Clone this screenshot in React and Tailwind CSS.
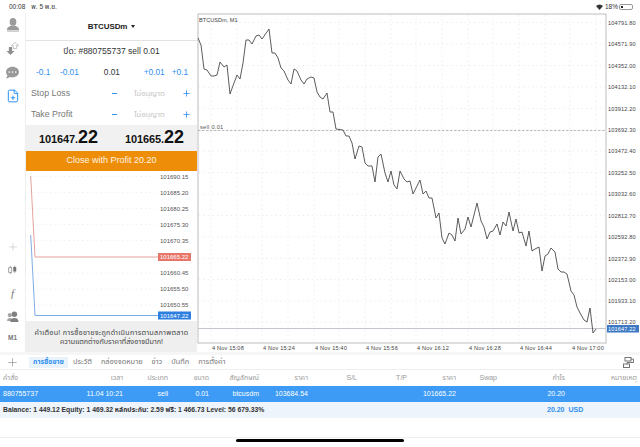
// App.jsx
import React from "react";
import { FaCommentDots } from "react-icons/fa";
import { FilePlus, Plus } from "lucide-react";

const mainLine =
  "198,38 201,45 204,69 207,70 211,76 214,76 217,75 220,62 224,67 227,65 230,94 234,83 237,75 240,79 243,63 246,40 249,40 252,44 256,36 259,35 262,39 269,29 272,53 275,53 278,58 281,68 284,71 288,80 291,84 294,69 297,71 301,80 304,84 307,79 311,77 314,78 317,92 320,97 323,99 327,93 330,112 333,112 336,129 343,130 346,136 349,136 352,143 355,159 359,146 362,147 365,163 368,166 372,166 375,182 378,157 381,154 385,173 388,182 391,171 394,185 397,189 400,171 404,179 407,182 410,181 413,194 420,180 423,194 426,191 429,198 432,198 436,218 439,213 442,238 445,244 449,233 452,235 455,241 458,218 461,234 465,229 468,217 471,227 477,203 481,221 484,227 487,239 490,232 493,231 497,224 500,235 503,222 506,226 509,212 513,231 516,219 519,233 522,232 526,246 529,231 532,251 535,249 539,247 542,271 545,256 548,254 551,248 555,252 558,269 561,272 564,272 567,274 571,291 574,295 577,307 580,313 584,320 587,322 590,308 593,333 596,329";

const priceLabels = [
  ["104791.80", 22.5],
  ["104571.90", 44],
  ["104352.00", 65.5],
  ["104132.10", 87],
  ["103912.20", 108.5],
  ["103692.30", 130],
  ["103472.40", 151],
  ["103252.50", 172.5],
  ["103032.60", 194],
  ["102812.70", 215.5],
  ["102592.80", 237],
  ["102372.90", 258.5],
  ["102153.00", 279.5],
  ["101933.10", 301],
  ["101713.20", 322],
];

const timeLabels = [
  ["4 Nov 15:08", 228],
  ["4 Nov 15:24", 279],
  ["4 Nov 15:40", 331],
  ["4 Nov 15:56", 382],
  ["4 Nov 16:12", 433],
  ["4 Nov 16:28", 485],
  ["4 Nov 16:44", 536],
  ["4 Nov 17:00", 588],
];

const gridX = [211, 237, 262, 288, 314, 339, 365, 391, 416, 442, 468, 493, 519, 545, 570, 596];

const miniLabels = [
  ["101690.15", 177.5],
  ["101685.20", 193.5],
  ["101680.25", 209.5],
  ["101675.30", 225.5],
  ["101670.35", 241.5],
  ["101660.45", 274],
  ["101655.50", 290],
  ["101650.55", 306],
];

const tabs = ["ประวัติ", "กล่องจดหมาย", "ข่าว", "บันทึก", "การตั้งค่า"];

const columns = ["คำสั่ง", "เวลา", "ประเภท", "ขนาด", "สัญลักษณ์", "ราคา", "S/L", "T/P", "ราคา", "Swap", "กำไร", "หมายเหตุ"];
const orderRow = ["880755737", "11.04 10:21", "sell", "0.01", "btcusdm", "103684.54", "", "", "101665.22", "", "20.20", ""];

const tableGrid = "grid grid-cols-[34px_86px_45px_41px_50px_49px_49px_50px_49px_41px_68px_72px] pl-[3px] pr-[3px] items-center";

const PriceChart = () => (
  <svg viewBox="197 13 443 339" className="w-full h-full block">
    <rect x="198" y="14" width="408" height="329" fill="#fff" stroke="#bdbdbd" strokeWidth="1" />
    {gridX.map((x) => (
      <line key={x} x1={x} x2={x} y1="15" y2="342" stroke="#e6e6e6" strokeWidth="0.7" strokeDasharray="1.5 3" />
    ))}
    {priceLabels.map(([label, y]) => (
      <line key={label} x1="199" x2="609" y1={y} y2={y} stroke="#e6e6e6" strokeWidth="0.7" strokeDasharray="1.5 3" />
    ))}
    <line x1="198" x2="606" y1="130.5" y2="130.5" stroke="#a8a8a8" strokeWidth="0.8" strokeDasharray="2.5 1.5" />
    <line x1="198" x2="606" y1="328.5" y2="328.5" stroke="#c4c4cc" strokeWidth="1" />
    <polyline points={mainLine} fill="none" stroke="#4a4a4a" strokeWidth="0.9" strokeLinejoin="miter" />
    <text x="199" y="21.5" fontSize="5.6" fill="#444">BTCUSDm, M1</text>
    <text x="200" y="129" fontSize="5.6" letterSpacing="0.3" fill="#555">sell 0.01</text>
    {priceLabels.map(([label, y]) => (
      <text key={label} x="608" y={y + 2} fontSize="5.6" letterSpacing="0.15" fill="#444">{label}</text>
    ))}
    <rect x="607" y="325" width="32" height="7.5" fill="#3d78c4" />
    <text x="608" y="331" fontSize="5.6" letterSpacing="0.15" fill="#fff">101647.22</text>
    {timeLabels.map(([label, x]) => (
      <text key={label} x={x} y="349.5" fontSize="5.6" letterSpacing="0.15" textAnchor="middle" fill="#444">{label}</text>
    ))}
  </svg>
);

const MiniChart = () => (
  <svg viewBox="26 172 171 150" className="w-full h-full block">
    {miniLabels.map(([label, y]) => (
      <line key={label} x1="28" x2="158" y1={y} y2={y} stroke="#ececec" strokeWidth="0.7" strokeDasharray="1.5 3" />
    ))}
    <polyline points="30.7,177 35,258 158,258" fill="none" stroke="#e5a29c" strokeWidth="1" />
    <polyline points="30.7,236 35,316.5 158,316.5" fill="none" stroke="#7fade6" strokeWidth="1" />
    {miniLabels.map(([label, y]) => (
      <text key={label} x="160" y={y + 2} fontSize="6" fill="#555">{label}</text>
    ))}
    <rect x="158" y="254" width="33" height="8" fill="#e8756a" />
    <text x="160" y="260" fontSize="6" fill="#fff">101665.22</text>
    <rect x="158" y="312.5" width="33" height="8" fill="#2f7fe0" />
    <text x="160" y="318.5" fontSize="6" fill="#fff">101647.22</text>
  </svg>
);

const UserIcon = () => (
  <svg width="14" height="14" viewBox="0 0 15 15" fill="#9b9b9b">
    <ellipse cx="7.5" cy="4.2" rx="3.6" ry="4.2" />
    <path d="M4.5 8.5 L10.5 8.5 L13.5 10.5 L14 13 L1 13 L1.5 10.5 Z" />
    <rect x="1" y="13.4" width="13" height="1.4" fill="#c6c6c6" />
  </svg>
);

const SwapIcon = () => (
  <svg width="13" height="13" viewBox="0 0 15 16">
    <path d="M3 6 H7 V11 H10 L5 16 L0 11 H3 Z" fill="#8f8f8f" />
    <path d="M8.5 8 V4.5 H6 L10.5 0.5 L15 4.5 H12.5 V8 Z" fill="#fff" stroke="#a8a8a8" strokeWidth="0.8" />
  </svg>
);

const CandleIcon = () => (
  <svg width="9" height="10" viewBox="0 0 12 12">
    <path d="M3 0.5 V11.5" stroke="#777" strokeWidth="0.8" />
    <rect x="1" y="3" width="4" height="6" fill="#fff" stroke="#777" strokeWidth="0.9" />
    <path d="M9 0 V10" stroke="#777" strokeWidth="0.8" />
    <rect x="7" y="2" width="4" height="6" fill="#777" />
  </svg>
);

const GroupIcon = () => (
  <svg width="12" height="11" viewBox="0 0 13 12" fill="#808080">
    <circle cx="3" cy="4.5" r="2.2" fill="#a5a5a5" />
    <path d="M0 11 Q0 7.5 3 7.5 Q5 7.5 5.5 9 L5.5 11 Z" fill="#a5a5a5" />
    <circle cx="8" cy="3.5" r="3" />
    <path d="M3.5 12 Q3.5 7.5 8 7.5 Q12.5 7.5 12.5 12 Z" />
  </svg>
);

const LayoutIcon = () => (
  <svg width="11" height="11" viewBox="0 0 11 11" fill="none" stroke="#666" strokeWidth="0.9">
    <rect x="2" y="0.5" width="6" height="3.5" />
    <rect x="0.5" y="7" width="6" height="3.5" />
    <path d="M8 2.2 H10.5 V5.5 H4 V7" />
  </svg>
);

const SlRow = ({ label }) => (
  <div className="h-[21px] flex items-center pl-[5px] pr-[6px]">
    <span className="w-[81px] text-[8.8px] text-[#777]">{label}</span>
    <div className="w-[5px] h-[1.5px] bg-[#2f8ff0]" />
    <span className="flex-1 text-center text-[#c4c4c4] text-[7.5px]">ไม่อนุญาต</span>
    <Plus className="text-[#2f8ff0]" size={9} strokeWidth={2.2} />
  </div>
);

const App = () => {
  return (
    <div className="w-[640px] h-[447px] overflow-hidden bg-white flex flex-col font-['Liberation_Sans','Noto_Sans_Thai','Noto_Sans',sans-serif] text-[#333]">
      {/* status bar */}
      <div className="h-[13px] flex items-center justify-between pl-[9px] pr-[7px] text-[6.5px] text-[#333]">
        <div className="flex gap-[6px]">
          <span>00:08</span>
          <span>พ. 5 พ.ย.</span>
        </div>
        <div className="flex items-center">
          <svg width="7" height="6" viewBox="0 0 7 6">
            <path d="M0 2 Q3.5 -1 7 2 L3.5 6 Z" fill="#333" />
          </svg>
          <span className="ml-[2px]">18%</span>
          <div className="w-[14px] h-[6px] border border-[#999] rounded-[2px] p-[1px] ml-[1px]">
            <div className="w-[2px] h-full bg-[#222]" />
          </div>
        </div>
      </div>

      <div className="h-[339px] flex">
        {/* left toolbar */}
        <div className="w-[26px] flex flex-col items-center border-r border-[#eeeeee]">
          <div className="mt-[5px] h-[14px]"><UserIcon /></div>
          <div className="mt-[10px] h-[13px]"><SwapIcon /></div>
          <FaCommentDots className="mt-[11px] text-[#9a9a9a]" size={13} />
          <FilePlus className="mt-[10px] text-[#1f8cf0]" size={14} strokeWidth={1.6} />
          <Plus className="mt-[138px] text-[#b5b5b5]" size={12} strokeWidth={1} />
          <div className="mt-[12px] h-[10px]"><CandleIcon /></div>
          <span className="mt-[12px] h-[12px] leading-[12px] font-['Liberation_Serif',serif] italic text-[11px] text-[#777]">f</span>
          <div className="mt-[12px] h-[11px]"><GroupIcon /></div>
          <span className="mt-[12px] text-[6.5px] leading-[8px] font-bold text-[#777]">M1</span>
        </div>

        {/* order panel */}
        <div className="w-[171px] flex flex-col">
          <div className="h-[28px] flex items-center justify-center border-b border-[#e2e2e2] text-[8px] font-bold text-[#222] tracking-[-0.1px]">
            BTCUSDm
            <svg className="ml-[4px]" width="4" height="3" viewBox="0 0 4 3">
              <path d="M0 0 H4 L2 3 Z" fill="#222" />
            </svg>
          </div>
          <div className="h-[20px] flex items-center justify-center text-[8.5px] text-[#333]">ปิด: #880755737 sell 0.01</div>
          <div className="h-[22px] flex items-center text-[8.3px] pl-[10px] pr-[9px] text-[#2f8ff0]">
            <span className="w-[24px]">-0.1</span>
            <span className="w-[44px]">-0.01</span>
            <span className="w-[40px] text-[#333]">0.01</span>
            <span className="w-[28px]">+0.01</span>
            <span className="ml-auto">+0.1</span>
          </div>
          <SlRow label="Stop Loss" />
          <SlRow label="Take Profit" />
          <div className="h-[26px] flex items-center bg-[#f1f1f1] pl-[13px] text-[#111] font-bold">
            <div className="w-[86px] flex items-baseline">
              <span className="text-[11px] tracking-[-0.1px]">101647.</span>
              <span className="text-[18px] leading-none">22</span>
            </div>
            <div className="flex items-baseline">
              <span className="text-[11px] tracking-[-0.1px]">101665.</span>
              <span className="text-[18px] leading-none">22</span>
            </div>
          </div>
          <div className="h-[20px] flex items-center justify-center bg-[#ee8e08] text-[#fff4e4] text-[9px]">Close with Profit 20.20</div>
          <div className="h-[150px]"><MiniChart /></div>
          <div className="flex-1 bg-[#efefef] flex items-center justify-center text-center leading-[9px] text-[#444]">
            <p className="text-[7.2px]">
              <span className="tracking-[0.25px]">คำเตือน! การซื้อขายจะถูกดำเนินการตามสภาพตลาด</span>
              <br />
              ความแตกต่างกับราคาที่ส่งอาจมีมาก!
            </p>
          </div>
        </div>

        {/* main chart */}
        <div className="flex-1"><PriceChart /></div>
      </div>

      {/* tabs */}
      <div className="h-[3px] bg-[#f6f6f6]" />
      <div className="h-[15px] flex items-center border-b border-[#efefef] text-[7.4px] text-[#777]">
        <Plus className="ml-[6px] text-[#777]" size={13} strokeWidth={1} />
        <span className="ml-[10px] h-[11px] w-[39px] flex items-center justify-center bg-[#eaf3fb] text-[#2f8ff0] font-bold text-[7px]">การซื้อขาย</span>
        <div className="flex gap-[9px] ml-[5px]">
          {tabs.map((tab) => (
            <span key={tab}>{tab}</span>
          ))}
        </div>
        <div className="ml-auto mr-[6px]"><LayoutIcon /></div>
      </div>

      {/* orders table */}
      <div className={`${tableGrid} h-[16px] text-[7px] text-[#9a9a9a]`}>
        {columns.map((col, i) => (
          <span key={i} className={i === 0 ? "text-left" : "text-right"}>{col}</span>
        ))}
      </div>
      <div className={`${tableGrid} h-[16px] text-[7px] text-white bg-[#3d9bf5]`}>
        {orderRow.map((val, i) => (
          <span key={i} className={i === 0 ? "text-left" : "text-right"}>{val}</span>
        ))}
      </div>
      <div className="h-[16px] flex items-center bg-[#eef4fb] pl-[3px] font-bold text-[#333]">
        <span className="w-[544px] text-[6.8px]">Balance: 1 449.12 Equity: 1 469.32 หลักประกัน: 2.59 ฟรี: 1 466.73 Level: 56 679.33%</span>
        <span className="text-[#2f8ff0] text-[7px]">20.20&nbsp;&nbsp;USD</span>
      </div>

      {/* home indicator */}
      <div className="flex-1 flex flex-col items-center">
        <div className="w-full h-px bg-[#f0f0f0] mt-[19px]" />
        <div className="w-[168px] h-[3px] bg-black rounded-full mt-[1px]" />
      </div>
    </div>
  );
};

export default App;
